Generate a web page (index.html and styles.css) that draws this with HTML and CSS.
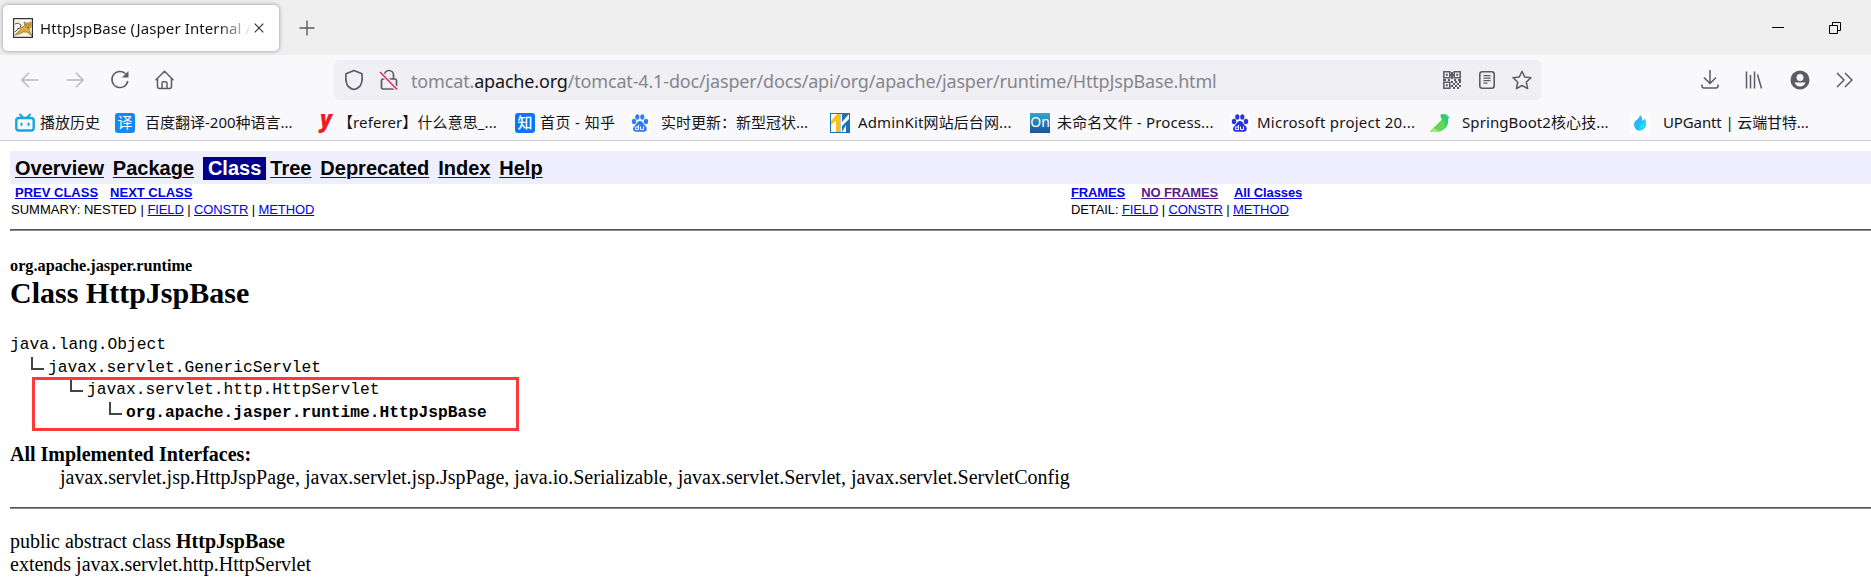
FILE: index.html
```html
<!DOCTYPE html>
<html lang="zh-CN">
<head>
<meta charset="utf-8">
<title>HttpJspBase (Jasper Internal API)</title>
<link rel="stylesheet" href="styles.css">
</head>
<body>
<header class="chrome">
  <div class="tabstrip">
    <div class="tab">
      <svg class="favicon" width="20" height="20" viewBox="0 0 20 20"><rect x=".6" y=".6" width="18.8" height="18.8" fill="#f7f4ec" stroke="#333" stroke-width="1.2"/><path d="M2 17l4-4 3-4 3-1-1-4 2 1h3l2-1v5l-2 2 1 3 2 4-5-4-4 0-4 2z" fill="#e0a93c" stroke="#8a6a2c" stroke-width=".7"/><path d="M2 6l3-1 3 2-1 3-3 1M2 14l3-3" stroke="#555" stroke-width="1" fill="none"/><path d="M12.500 7h1M15.500 7h1M14 9.500h1.500" stroke="#222"/></svg>
      <span class="tab-title">HttpJspBase (Jasper Internal A</span>
      <svg class="tab-close" width="10" height="10" viewBox="0 0 10 10"><path d="M.7.7l8.6 8.6M9.3.7L.7 9.3" stroke="#333" stroke-width="1.2"/></svg>
    </div>
    <svg class="newtab" width="16" height="16" viewBox="0 0 16 16"><path d="M8 .5v15M.5 8h15" stroke="#5b5b66" stroke-width="1.4"/></svg>
    <div class="window-buttons">
      <svg width="12" height="12" viewBox="0 0 12 12"><path d="M0 5.5h12" stroke="#000"/></svg>
      <svg width="12" height="12" viewBox="0 0 12 12" fill="none" stroke="#000"><path d="M.5 3.5h8v8h-8zM3.500 3.500v-3h8v8h-3"/></svg>
    </div>
  </div>
  <div class="toolbar">
    <div class="nav-buttons">
      <svg width="20" height="20" viewBox="0 0 20 20" fill="none" stroke="#b7b7bd" stroke-width="1.4"><path d="M18.500 10H2M9 2.800L1.800 10 9 17.200"/></svg>
      <svg width="20" height="20" viewBox="0 0 20 20" fill="none" stroke="#b7b7bd" stroke-width="1.4"><path d="M1.500 10H18M11 2.800L18.200 10 11 17.200"/></svg>
      <svg width="20" height="20" viewBox="0 0 20 20" fill="none" stroke="#5b5b66" stroke-width="1.500"><path d="M17.800 11A8 8 0 1 1 15.500 3.800"/><path d="M18.500 1v6.500H12z" fill="#5b5b66" stroke="none"/></svg>
      <svg width="20" height="20" viewBox="0 0 20 20" fill="none" stroke="#5b5b66" stroke-width="1.500" stroke-linejoin="round" stroke-linecap="round"><path d="M1 9.800L9.500 1.300 18 9.800M2.500 8.500v8q0 2 2 2h10q2 0 2-2v-8M7 18.300v-5q0-1.500 1.500-1.500h2q1.500 0 1.500 1.500v5"/></svg>
    </div>
    <div class="urlbar">
      <svg class="shield" width="20" height="22" viewBox="0 0 20 22" fill="none" stroke="#5b5b66" stroke-width="1.700" stroke-linejoin="round"><path d="M10 1.500l8 3.300q1 10-3 13.200-2 1.800-5 2.500-3-.7-5-2.500Q1 14.800 2 4.800z"/></svg>
      <svg class="lock" width="20" height="22" viewBox="0 0 20 22" fill="none"><path d="M5.500 10V6a4.500 4.500 0 0 1 9 0v4M4 10h12q1.500 0 1.500 1.500v7q0 1.500-1.500 1.500H4q-1.500 0-1.500-1.500v-7Q2.500 10 4 10z" stroke="#5b5b66" stroke-width="1.700"/><path d="M.5 2.500l17.500 18" stroke="#f0f0f4" stroke-width="4"/><path d="M1 3l17 17.500" stroke="#e8274f" stroke-width="1.500"/></svg>
      <span class="url">tomcat.<b>apache.org</b>/tomcat-4.1-doc/jasper/docs/api/org/apache/jasper/runtime/HttpJspBase.html</span>
      <div class="url-actions">
        <svg width="18" height="18" viewBox="0 0 18 18" fill="none" stroke="#5b5b66" stroke-width="1.600"><path d="M.8.8h6v6h-6zM11.200.8h6v6h-6zM.8 11.200h6v6h-6z"/><path d="M2.800 3.800h2M13.200 3.800h2M2.800 14.200h2" stroke-width="2"/><path d="M7 4h4M9 1v2M9 5v3M0 9h3M5 9h2M11 9h2M15 9h3M8 11h2M12 11h2M16 11h2M10 13h2M14 13h2M8 15h2M12 15h2M16 15h2M10 17h2M14 17h2" stroke-width="2"/></svg>
        <svg width="16" height="18" viewBox="0 0 16 18" fill="none" stroke="#5b5b66" stroke-width="1.600" stroke-linecap="round"><rect x=".8" y=".8" width="14.400" height="16.400" rx="2.500"/><path d="M5 4.700h6M5 7.200h6M5 9.700h6M5 12.200h3" stroke-width="1.300"/></svg>
        <svg width="20" height="20" viewBox="0 0 20 20" fill="none" stroke="#5b5b66" stroke-width="1.500" stroke-linejoin="round"><path d="M10 1.200l2.700 5.800 6.300.7-4.700 4.300 1.300 6.600L10 15.500l-5.600 3.100L5.700 12 1 7.700 7.300 7z"/></svg>
      </div>
    </div>
    <div class="tools">
      <svg width="18" height="20" viewBox="0 0 18 20" fill="none" stroke="#5b5b66" stroke-width="1.500"><path d="M9 0v13M3 7.500l6 6 6-6M1 14.500v1.500q0 2 2 2h12q2 0 2-2v-1.500"/></svg>
      <svg width="18" height="18" viewBox="0 0 18 18" fill="none" stroke="#5b5b66" stroke-width="1.500"><path d="M1.500 .5v17M5.500 4v13.500M9.500 .5v17M12.500 3.500l4 14"/></svg>
      <svg width="20" height="20" viewBox="0 0 20 20"><circle cx="10" cy="10" r="9.500" fill="#5b5b66"/><circle cx="10" cy="7.500" r="3.500" fill="#f9f9fb"/><path d="M4.500 12.500h11q-1.500 4-5.500 4t-5.500-4z" fill="#f9f9fb"/></svg>
      <svg width="17" height="16" viewBox="0 0 17 16" fill="none" stroke="#5b5b66" stroke-width="1.500"><path d="M1 1l7 7-7 7M9 1l7 7-7 7"/></svg>
    </div>
  </div>
  <nav class="bookmarks">
    <a class="bm"><svg width="20" height="20" viewBox="0 0 20 20" fill="none" stroke="#12a8e0" stroke-width="2.400" stroke-linecap="round"><rect x="1.300" y="5" width="17.400" height="12.500" rx="2.500"/><path d="M5 1.500L8 4.500M15 1.500L12 4.500M6.500 10.500v1.500M13.500 10.500v1.500" stroke-width="2"/></svg><span class="t1">播放历史</span></a>
    <a class="bm"><span class="badge trans">译</span><span class="t2">百度翻译-200种语言...</span></a>
    <a class="bm"><span class="youdao">y</span><span class="t3">【referer】什么意思_...</span></a>
    <a class="bm"><span class="badge zhi">知</span><span class="t4">首页 - 知乎</span></a>
    <a class="bm"><svg class="paw" width="20" height="20" viewBox="0 0 20 20" fill="#2d7df5"><rect width="20" height="20" fill="#fff"/><ellipse cx="4" cy="8.500" rx="2.200" ry="2.700"/><ellipse cx="7.300" cy="4" rx="2.100" ry="2.800"/><ellipse cx="12.300" cy="4" rx="2.100" ry="2.800"/><ellipse cx="16" cy="8.500" rx="2.200" ry="2.700"/><path d="M10 8c3 0 3.500 3.500 6 5.500 2 3 0 5.500-3 5.300H7C3 19 2 16 4 13.500 6.500 11.500 7 8 10 8z"/><path d="M8.500 12v4.500h-3v-2.500h3M10.500 13.500v3h3v-3" stroke="#fff" fill="none"/></svg><span class="t5">实时更新：新型冠状...</span></a>
    <a class="bm"><svg width="20" height="20" viewBox="0 0 20 20"><rect width="20" height="20" fill="#1673b8"/><path d="M1 1h18v18H1z" fill="#fff"/><path d="M1 8L7 1h3v18H6V8l-5 4z" fill="#f7c416"/><path d="M12 1h7L12 9zM19 6v13h-3v-7l-4 7v-6z" fill="#1673b8"/><path d="M10 1h1v18h-1z" fill="#b9c7ce"/></svg><span class="t6">AdminKit网站后台网...</span></a>
    <a class="bm"><span class="badge on">On</span><span class="t7">未命名文件 - Process...</span></a>
    <a class="bm"><svg class="paw" width="20" height="20" viewBox="0 0 20 20" fill="#2932e1"><rect width="20" height="20" fill="#fff"/><ellipse cx="4" cy="8.500" rx="2.200" ry="2.700"/><ellipse cx="7.300" cy="4" rx="2.100" ry="2.800"/><ellipse cx="12.300" cy="4" rx="2.100" ry="2.800"/><ellipse cx="16" cy="8.500" rx="2.200" ry="2.700"/><path d="M10 8c3 0 3.500 3.500 6 5.500 2 3 0 5.500-3 5.300H7C3 19 2 16 4 13.500 6.500 11.500 7 8 10 8z"/><path d="M8.500 12v4.500h-3v-2.500h3M10.500 13.500v3h3v-3" stroke="#fff" fill="none"/></svg><span class="t8">Microsoft project 20...</span></a>
    <a class="bm"><svg width="20" height="20" viewBox="0 0 20 20"><path d="M10.500 1.500Q16 0 18 3l1.500 1.500L18 6q1 8-6 11.500Q6 20 0 18.500L12 7q-2-2.500-1.500-5.500z" fill="#2fcf6f"/><path d="M12 6.500q5 4 2 9-5 4-14 3z" fill="#63d657"/><path d="M4 15q3 3 6 3-5 2-10 .5z" fill="#a6ef58"/></svg><span class="t9">SpringBoot2核心技...</span></a>
    <a class="bm"><svg width="20" height="20" viewBox="0 0 20 20"><rect width="20" height="20" fill="#fff"/><path d="M10 2q3 3 2 6l3-2q3 7-3 11-5 2-7-2-2-3 0-7 4-2 5-6z" fill="#27b8f5"/><path d="M15 6q3 8-3 11-3 1-3-2 0-3 3-5 2-1 3-4z" fill="#1ddcf7"/></svg><span class="t10">UPGantt | 云端甘特...</span></a>
  </nav>
</header>

<main class="doc">
  <div class="topnav">
    <a>Overview</a><a>Package</a><span class="current">Class</span><a>Tree</a><a>Deprecated</a><a>Index</a><a>Help</a>
  </div>
  <div class="subnav">
    <div class="cell">
      <div class="row strong first"><a>PREV CLASS</a><a>NEXT CLASS</a></div>
      <div class="row"><span class="summary">SUMMARY: NESTED | </span><a>FIELD</a> | <a>CONSTR</a> | <a>METHOD</a></div>
    </div>
    <div class="cell">
      <div class="row strong second"><a>FRAMES</a><a class="visited">NO FRAMES</a><a>All Classes</a></div>
      <div class="row">DETAIL: <a>FIELD</a> | <a>CONSTR</a> | <a>METHOD</a></div>
    </div>
  </div>
  <hr class="rule">
  <h2 class="title"><span class="package">org.apache.jasper.runtime</span>Class HttpJspBase</h2>
  <div class="tree">
    <div class="node">java.lang.Object</div>
    <div class="node l1"><i class="elbow"></i>javax.servlet.GenericServlet</div>
    <div class="node l2"><i class="elbow"></i>javax.servlet.http.HttpServlet</div>
    <div class="node l3"><i class="elbow"></i><b>org.apache.jasper.runtime.HttpJspBase</b></div>
    <div class="highlight"></div>
  </div>
  <dl class="interfaces">
    <dt>All Implemented Interfaces:</dt>
    <dd>javax.servlet.jsp.HttpJspPage, javax.servlet.jsp.JspPage, java.io.Serializable, javax.servlet.Servlet, javax.servlet.ServletConfig</dd>
  </dl>
  <hr class="rule">
  <div class="decl">public abstract class <b>HttpJspBase</b><br>extends javax.servlet.http.HttpServlet</div>
</main>
</body>
</html>
```
FILE: styles.css
```css
* { box-sizing: border-box; }
html, body { height: 100%; }
body { margin: 0; background: #fff; overflow: hidden; color: #000; font-family: "Liberation Serif", serif; }
svg { display: block; flex: none; }

.chrome { height: 141px; background: #f9f9fb; border-bottom: 1px solid #ccc; font-family: "Noto Sans", "Noto Sans CJK SC", sans-serif; color: #15141a; }
.tabstrip { height: 55px; background: #efefef; display: flex; align-items: center; padding-left: 3px; }
.tab { width: 276px; height: 46px; background: #fff; border-radius: 5px; box-shadow: 0 0 4px rgba(80,80,110,.6); display: flex; align-items: center; padding: 0 15px 0 10px; }
.tab-title { margin-left: 7px; width: 213px; white-space: nowrap; font-size: 15px; letter-spacing: .1px; -webkit-mask-image: linear-gradient(90deg, #000 178px, transparent 212px); mask-image: linear-gradient(90deg, #000 178px, transparent 212px); }
.tab-close { margin-left: 1px; }
.newtab { margin-left: 20px; }
.window-buttons { margin-left: auto; display: flex; gap: 45px; padding-right: 30px; }

.toolbar { height: 50px; display: flex; align-items: center; }
.nav-buttons { display: flex; gap: 25px; padding-left: 20px; width: 334px; }
.urlbar { width: 1207px; height: 40px; border-radius: 5px; background: #f0f0f4; display: flex; align-items: center; padding-left: 10px; }
.lock { margin-left: 15px; }
.url { margin-left: 12px; font-size: 18px; letter-spacing: -.165px; color: #86858c; white-space: nowrap; padding-top: 1px; }
.url b { font-weight: 400; color: #15141a; }
.url-actions { margin-left: auto; display: flex; align-items: center; gap: 17.500px; padding-right: 9px; }
.tools { flex: 1; display: flex; align-items: center; justify-content: space-between; padding: 0 18px 0 160px; }

.bookmarks { display: grid; grid-template-columns: 100px 200px 200px 115px 200px 200px 200px 200px 200px 1fr; padding-left: 15px; height: 35px; align-items: center; }
.bm { display: flex; align-items: center; white-space: nowrap; font-size: 15px; height: 22px; line-height: 22px; }
.bm span:last-child { margin-top: -2px; }
.badge { width: 20px; height: 20px; border-radius: 3px; color: #fff; text-align: center; line-height: 18px; flex: none; }
.trans { background: #1687f7; }
.zhi { background: #0a75fb; font-weight: 500; }
.on { background: linear-gradient(#35a7cf, #1b4f9b); border-radius: 0; font-size: 14px; }
.youdao { width: 20px; padding-left: 2px; text-align: center; color: #ed1c24; font: italic 900 22px/20px "Noto Sans", sans-serif; margin-top: -9px; }
.t1 { margin-left: 5px; }
.t2 { margin-left: 10px; }
.t3 { margin-left: 3px; letter-spacing: .1px; }
.t4 { margin-left: 5px; letter-spacing: .4px; }
.t5 { margin-left: 11px; }
.t6 { margin-left: 8px; letter-spacing: .12px; }
.t7 { margin-left: 7px; letter-spacing: .16px; }
.t8 { margin-left: 7px; letter-spacing: .24px; }
.t9 { margin-left: 12px; letter-spacing: .1px; }
.t10 { margin-left: 13px; letter-spacing: -.12px; }

.doc { padding: 10px 0 0 10px; font-size: 20px; line-height: 23px; }
.topnav { height: 33px; background: #eeeeff; display: flex; align-items: center; gap: 8.900px; padding: 1px 0 0 5px; font: 700 20px/23px "Liberation Sans", sans-serif; }
.topnav a { text-decoration: underline; text-decoration-color: #00e; text-decoration-thickness: 1px; text-underline-offset: 2px; }
.current { background: #00008b; color: #fff; padding: 0 5px; margin-right: -4.900px; }
.subnav { display: grid; grid-template-columns: 1061px 1fr; font: 13px/17px "Liberation Sans", sans-serif; height: 35px; }
.row { white-space: pre; padding-left: 1px; letter-spacing: -.11px; }
.summary { letter-spacing: .02px; }
.cell:last-child .row { padding-left: 0; }
.row a { color: #00e; text-decoration: underline; }
.row a.visited { color: #551a8b; }
.strong { display: flex; font-weight: 700; letter-spacing: 0; }
.first { padding-left: 5px; gap: 12px; }
.second { gap: 16px; letter-spacing: -.12px; }
.rule { border: 0; height: 2px; margin: 10px 0 0; background: linear-gradient(#555 50%, #888 50%); }
.title { margin: 25px 0 0; font-size: 30px; line-height: 34px; }
.package { display: block; font-size: 16.250px; line-height: 20px; }
.tree { position: relative; margin-top: 24px; font: 16.250px/22.500px "Liberation Mono", monospace; }
.node { display: flex; height: 22.500px; }
.l1 { padding-left: 21px; }
.l2 { padding-left: 60px; }
.l3 { padding-left: 99px; }
.elbow { width: 13px; height: 13px; margin: 0 4px 0 0; border-left: 2px solid #444; border-bottom: 2px solid #444; }
.highlight { position: absolute; left: 22px; top: 43px; width: 487px; height: 54px; border: 3px solid #fc3a3a; }
.interfaces { margin: 19px 0 0; }
dt { font-weight: 700; }
dd { margin-left: 50px; }
.interfaces + .rule { margin-top: 18px; }
.decl { margin-top: 21px; }
```
